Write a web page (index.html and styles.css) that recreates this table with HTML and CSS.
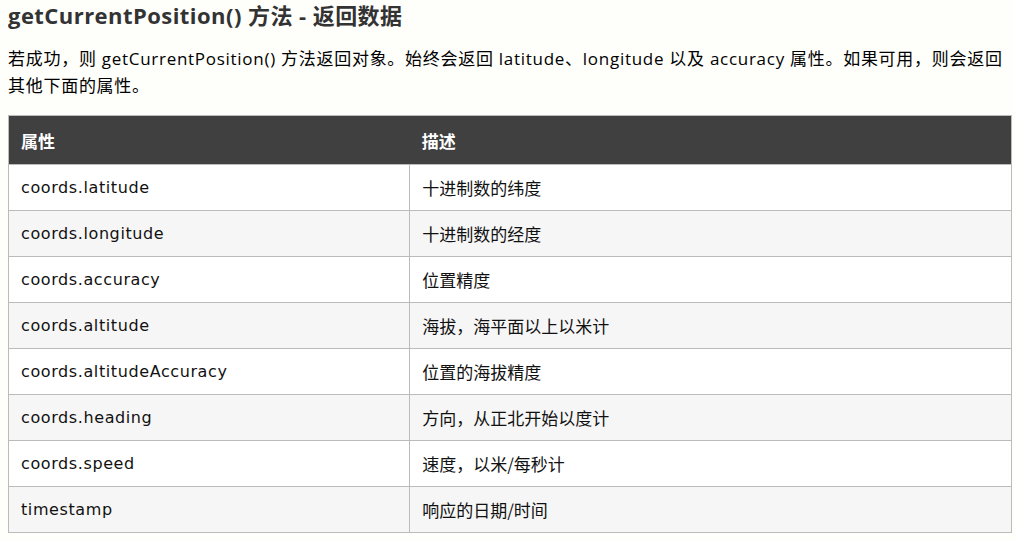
FILE: index.html
```html
<!DOCTYPE html>
<html lang="zh">
<head>
<meta charset="utf-8">
<title>getCurrentPosition() 方法 - 返回数据</title>
<link rel="stylesheet" href="styles.css">
</head>
<body>
<h2 class="title">getCurrentPosition() 方法 - 返回数据</h2>
<p class="intro">若成功，则 getCurrentPosition() 方法返回对象。始终会返回 latitude、longitude 以及 accuracy 属性。如果可用，则会返回其他下面的属性。</p>
<table class="ref">
  <thead>
    <tr><th class="col-prop">属性</th><th>描述</th></tr>
  </thead>
  <tbody>
    <tr><td>coords.latitude</td><td>十进制数的纬度</td></tr>
    <tr><td>coords.longitude</td><td>十进制数的经度</td></tr>
    <tr><td>coords.accuracy</td><td>位置精度</td></tr>
    <tr><td>coords.altitude</td><td>海拔，海平面以上以米计</td></tr>
    <tr><td>coords.altitudeAccuracy</td><td>位置的海拔精度</td></tr>
    <tr><td>coords.heading</td><td>方向，从正北开始以度计</td></tr>
    <tr><td>coords.speed</td><td>速度，以米/每秒计</td></tr>
    <tr><td>timestamp</td><td>响应的日期/时间</td></tr>
  </tbody>
</table>
</body>
</html>
```

FILE: styles.css
```css
html, body {
  background: #fefefb;
}
body {
  margin: 0 3px 0 8px;
  color: #000;
  font-family: "Open Sans", "Noto Sans CJK SC", sans-serif;
}
.title {
  margin: 0;
  font-size: 22px;
  line-height: 30px;
  font-weight: 700;
  letter-spacing: 0.45px;
  color: #333;
}
.intro {
  margin: 15px 0 16px;
  font-size: 17px;
  line-height: 27px;
  letter-spacing: 0.72px;
  color: #000;
}
.ref {
  width: 1004px;
  border-collapse: collapse;
  border: 1px solid #bbb;
  font-family: "DejaVu Sans", "Noto Sans CJK SC", sans-serif;
  font-size: 16px;
}
.ref th {
  background: #404040;
  color: #fff;
  text-align: left;
  font-weight: 700;
  font-size: 17px;
  font-family: "Noto Sans CJK SC", sans-serif;
  height: 49px;
  padding: 0 12px;
  box-sizing: border-box;
}
.col-prop {
  width: 40%;
}
.ref td {
  height: 46px;
  padding: 0 12px;
  box-sizing: border-box;
  border: 1px solid #bbb;
  color: #111;
  letter-spacing: 0.6px;
}
.ref td + td {
  font-family: "Noto Sans CJK SC", sans-serif;
  font-size: 17px;
  letter-spacing: 0;
}
.ref tbody tr:nth-child(odd) {
  background: #fff;
}
.ref tbody tr:nth-child(even) {
  background: #f6f6f6;
}
```
